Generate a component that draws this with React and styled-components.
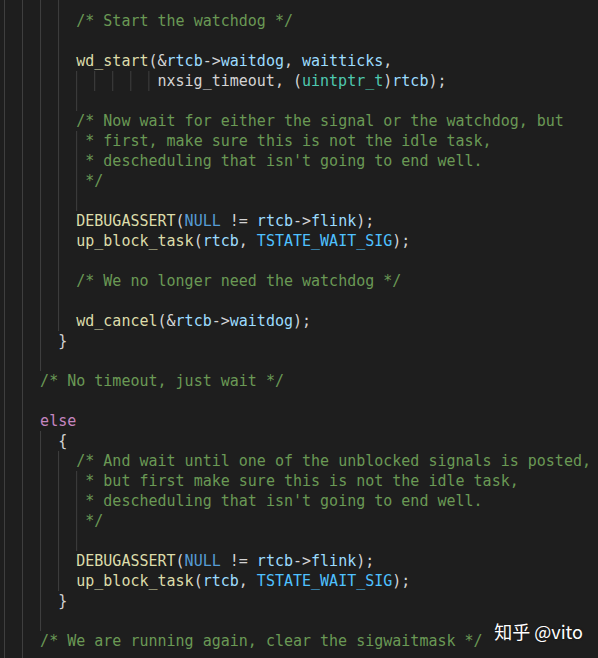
import styled, { createGlobalStyle } from "styled-components";

const GlobalStyle = createGlobalStyle`
  html, body {
    margin: 0;
    padding: 0;
    background: #1e1e1e;
  }
`;

const colors = {
  c: "#6a9955",
  fn: "#dcdcaa",
  v: "#9cdcfe",
  p: "#d4d4d4",
  k: "#569cd6",
  cst: "#4fc1ff",
  ty: "#4ec9b0",
  ctl: "#c586c0",
};

// i = indent in columns, g = guide count for empty lines
const lines = [
  { g: 4 },
  { i: 8, t: [["c", "/* Start the watchdog */"]] },
  { g: 4 },
  {
    i: 8,
    t: [
      ["fn", "wd_start"],
      ["p", "(&"],
      ["v", "rtcb"],
      ["p", "->"],
      ["v", "waitdog"],
      ["p", ", "],
      ["v", "waitticks"],
      ["p", ","],
    ],
  },
  {
    i: 17,
    t: [
      ["p", "nxsig_timeout, ("],
      ["ty", "uintptr_t"],
      ["p", ")"],
      ["v", "rtcb"],
      ["p", ");"],
    ],
  },
  { g: 5 },
  { i: 8, t: [["c", "/* Now wait for either the signal or the watchdog, but"]] },
  { i: 9, t: [["c", "* first, make sure this is not the idle task,"]] },
  { i: 9, t: [["c", "* descheduling that isn't going to end well."]] },
  { i: 9, t: [["c", "*/"]] },
  { g: 5 },
  {
    i: 8,
    t: [
      ["fn", "DEBUGASSERT"],
      ["p", "("],
      ["k", "NULL"],
      ["p", " != "],
      ["v", "rtcb"],
      ["p", "->"],
      ["v", "flink"],
      ["p", ");"],
    ],
  },
  {
    i: 8,
    t: [
      ["fn", "up_block_task"],
      ["p", "("],
      ["v", "rtcb"],
      ["p", ", "],
      ["cst", "TSTATE_WAIT_SIG"],
      ["p", ");"],
    ],
  },
  { g: 4 },
  { i: 8, t: [["c", "/* We no longer need the watchdog */"]] },
  { g: 4 },
  {
    i: 8,
    t: [
      ["fn", "wd_cancel"],
      ["p", "(&"],
      ["v", "rtcb"],
      ["p", "->"],
      ["v", "waitdog"],
      ["p", ");"],
    ],
  },
  { i: 6, t: [["p", "}"]] },
  { g: 3 },
  { i: 4, t: [["c", "/* No timeout, just wait */"]] },
  { g: 2 },
  { i: 4, t: [["ctl", "else"]] },
  { i: 6, t: [["p", "{"]] },
  { i: 8, t: [["c", "/* And wait until one of the unblocked signals is posted,"]] },
  { i: 9, t: [["c", "* but first make sure this is not the idle task,"]] },
  { i: 9, t: [["c", "* descheduling that isn't going to end well."]] },
  { i: 9, t: [["c", "*/"]] },
  { g: 5 },
  {
    i: 8,
    t: [
      ["fn", "DEBUGASSERT"],
      ["p", "("],
      ["k", "NULL"],
      ["p", " != "],
      ["v", "rtcb"],
      ["p", "->"],
      ["v", "flink"],
      ["p", ");"],
    ],
  },
  {
    i: 8,
    t: [
      ["fn", "up_block_task"],
      ["p", "("],
      ["v", "rtcb"],
      ["p", ", "],
      ["cst", "TSTATE_WAIT_SIG"],
      ["p", ");"],
    ],
  },
  { i: 6, t: [["p", "}"]] },
  { g: 3 },
  { i: 4, t: [["c", "/* We are running again, clear the sigwaitmask */"]] },
  { g: 2 },
];

export default function App() {
  return (
    <Screen>
      <GlobalStyle />
      <Editor>
        {lines.map((line, n) => (
          <Line key={n}>
            <Indent $cols={line.t ? line.i : line.g * 2} />
            {line.t &&
              line.t.map(([kind, text], k) => (
                <Token key={k} $kind={kind}>
                  {text}
                </Token>
              ))}
          </Line>
        ))}
      </Editor>
      <Watermark>知乎 @vito</Watermark>
    </Screen>
  );
}

const Screen = styled.div`
  position: relative;
  width: 598px;
  height: 658px;
  overflow: hidden;
  background: #1e1e1e;
`;

const Editor = styled.div`
  margin-top: -9px;
  padding-left: 4px;
  font-family: "DejaVu Sans Mono", "Liberation Mono", monospace;
  font-size: 15px;
  line-height: 20px;
  white-space: pre;
`;

const Line = styled.div`
  display: flex;
  height: 20px;
`;

const Indent = styled.span`
  flex: none;
  width: ${(p) => p.$cols * 9.03}px;
  height: 20px;
  background-image: linear-gradient(to right, #404040 1px, transparent 1px);
  background-size: 18.06px 20px;
  background-repeat: repeat-x;
`;

const Token = styled.span`
  color: ${(p) => colors[p.$kind]};
`;

const Watermark = styled.div`
  position: absolute;
  right: 15px;
  bottom: 15px;
  color: #ffffff;
  font-family: "Noto Sans CJK SC", "Noto Sans", sans-serif;
  font-size: 18px;
  line-height: 24px;
  text-shadow: 0 0 2px rgba(0, 0, 0, 0.5);
`;
